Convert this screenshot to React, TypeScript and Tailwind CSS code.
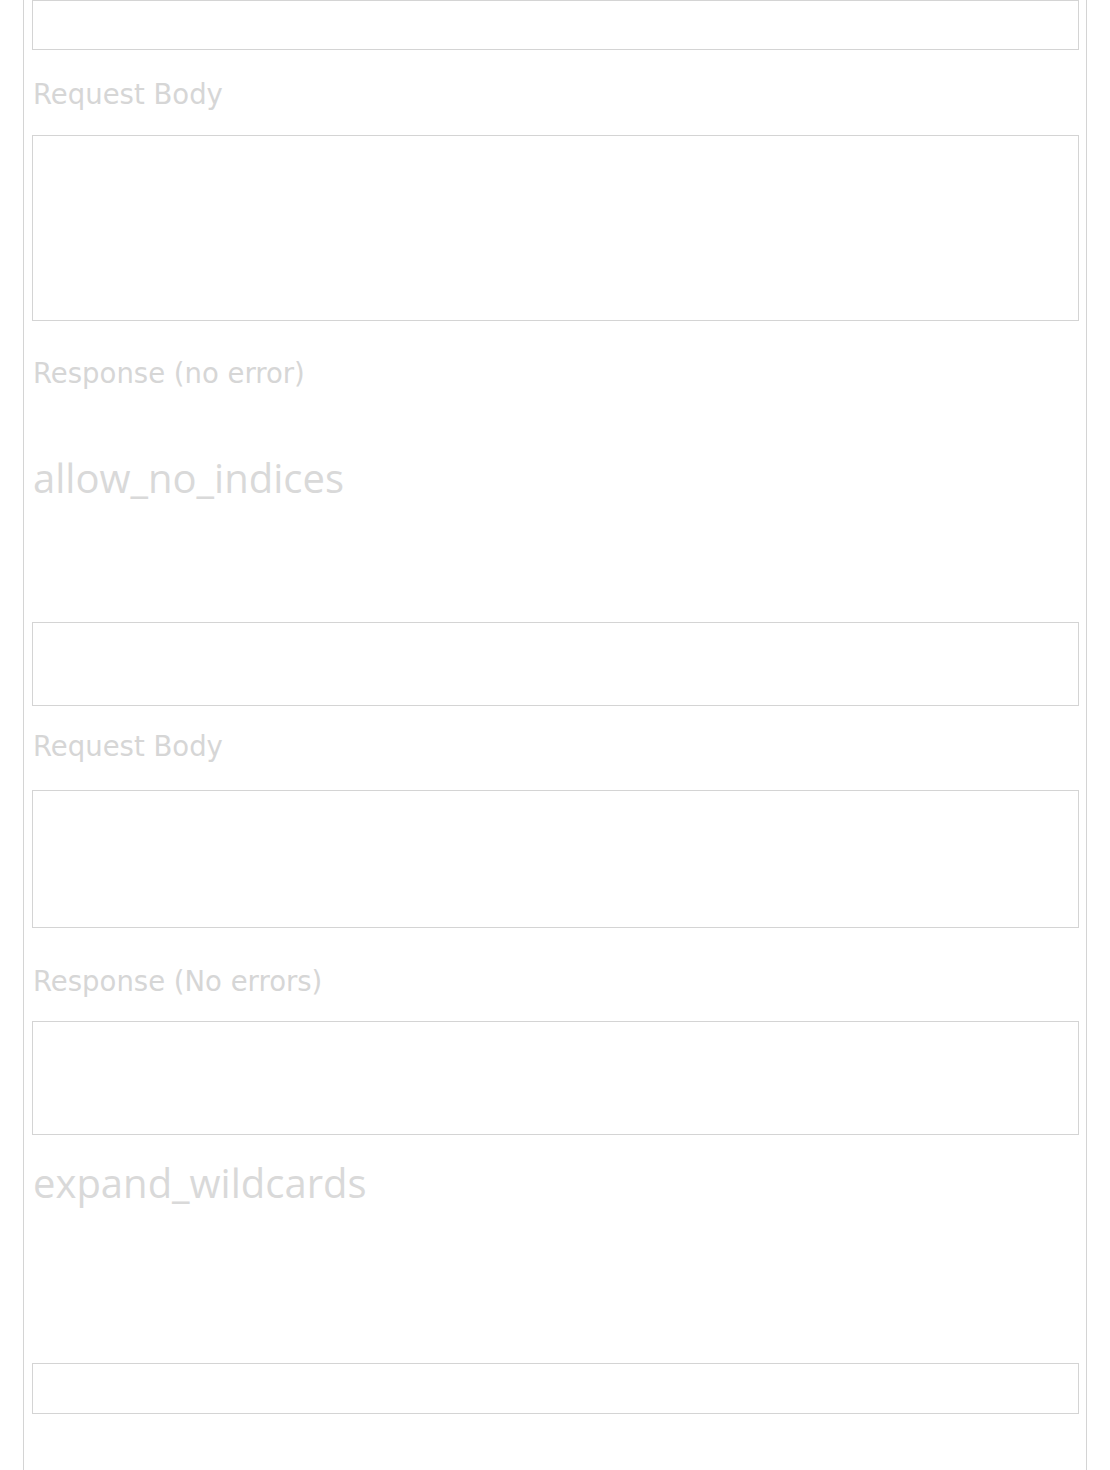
const labelCls = "pl-px text-[27.5px] leading-[32px] text-[#d6d6d6] font-['DejaVu_Sans',sans-serif]";
const headingCls = "pl-px text-[40px] leading-[48px] text-[#d9d9d9] font-['Open_Sans',sans-serif]";
const boxCls = "w-full border border-[#d4d4d4] bg-white";

function Label({ text, className }: { text: string; className: string }) {
  return <div className={`${labelCls} ${className}`}>{text}</div>;
}

export default function App() {
  return (
    <div className="min-h-[1470px] w-[1110px] bg-white">
      <div className="ml-[23px] w-[1064px] min-h-[1470px] border-x border-[#d4d4d4] pl-[8px] pr-[7px] flex flex-col">
        <div className={`${boxCls} h-[50px]`} />
        <Label text="Request Body" className="mt-[28px]" />
        <div className={`${boxCls} h-[186px] mt-[25px]`} />
        <Label text="Response (no error)" className="mt-[36px]" />

        <h2 className={`${headingCls} mt-[65px]`}>allow_no_indices</h2>
        <div className={`${boxCls} h-[84px] mt-[120px]`} />
        <Label text="Request Body" className="mt-[24px]" />
        <div className={`${boxCls} h-[138px] mt-[28px]`} />
        <Label text="Response (No errors)" className="mt-[37px]" />
        <div className={`${boxCls} h-[114px] mt-[24px]`} />

        <h2 className={`${headingCls} mt-[24px]`}>expand_wildcards</h2>
        <div className={`${boxCls} h-[51px] mt-[156px]`} />
      </div>
    </div>
  );
}
